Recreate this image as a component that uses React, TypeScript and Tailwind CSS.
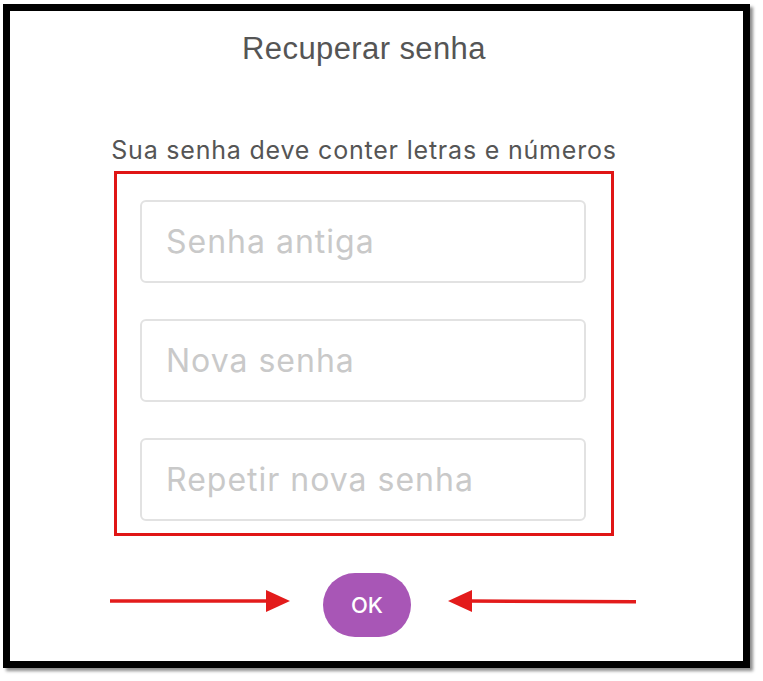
import React from "react";

const fields = ["Senha antiga", "Nova senha", "Repetir nova senha"];

function Arrow({ dir }: { dir: "right" | "left" }) {
  const w = dir === "right" ? 180 : 188;
  return (
    <svg width={w} height="30" viewBox={`0 0 ${w} 30`} className="block">
      {dir === "right" ? (
        <>
          <line x1="0" y1="11" x2={w - 20} y2="11" stroke="#e31b1b" strokeWidth="3.5" />
          <polygon points={`${w - 24},0 ${w},11 ${w - 24},22`} fill="#e31b1b" />
        </>
      ) : (
        <>
          <line x1="20" y1="11" x2={w} y2="11.8" stroke="#e31b1b" strokeWidth="3.5" />
          <polygon points="24,0 0,11 24,22" fill="#e31b1b" />
        </>
      )}
    </svg>
  );
}

export default function App() {
  return (
    <div className="w-[763px] h-[681px] bg-white overflow-hidden">
      <div className="ml-[3px] mt-[4px] w-[747px] h-[664px] border-[7px] border-black bg-white shadow-[3px_3px_3px_rgba(0,0,0,0.45)]">
        {/* content column */}
        <div className="ml-[104px] w-[500px]">
          <h1
            className="mt-[20px] text-center text-[31px] leading-[36px] text-[#555555] tracking-[0.4px]"
            style={{ fontFamily: '"Liberation Sans", Arial, sans-serif' }}
          >
            Recuperar senha
          </h1>

          <p
            className="mt-[67px] -mx-[12px] text-center text-[25px] leading-[32px] text-[#555555] tracking-[0.8px] whitespace-nowrap"
            style={{ fontFamily: "Inter, sans-serif" }}
          >
            Sua senha deve conter letras e números
          </p>

          {/* highlighted inputs */}
          <div className="mt-[5px] border-[3px] border-[#e01515] pt-[26px] pb-[12px] pl-[23px] pr-[25px] flex flex-col gap-[36px]">
            {fields.map((f) => (
              <div
                key={f}
                className="h-[83px] rounded-[6px] border-2 border-[#e2e2e2] flex items-center pl-[24px] text-[32px] tracking-[1px] text-[#c9c9c9]"
                style={{ fontFamily: "Inter, sans-serif" }}
              >
                {f}
              </div>
            ))}
          </div>
        </div>

        {/* button row */}
        <div className="mt-[37px] ml-[100px] flex items-center">
          <Arrow dir="right" />
          <button
            className="ml-[33px] w-[88px] h-[64px] rounded-[32px] bg-[#a856b6] text-white text-[22px] font-medium"
            style={{ fontFamily: "Inter, sans-serif" }}
          >
            OK
          </button>
          <div className="ml-[37px]">
            <Arrow dir="left" />
          </div>
        </div>
      </div>
    </div>
  );
}
